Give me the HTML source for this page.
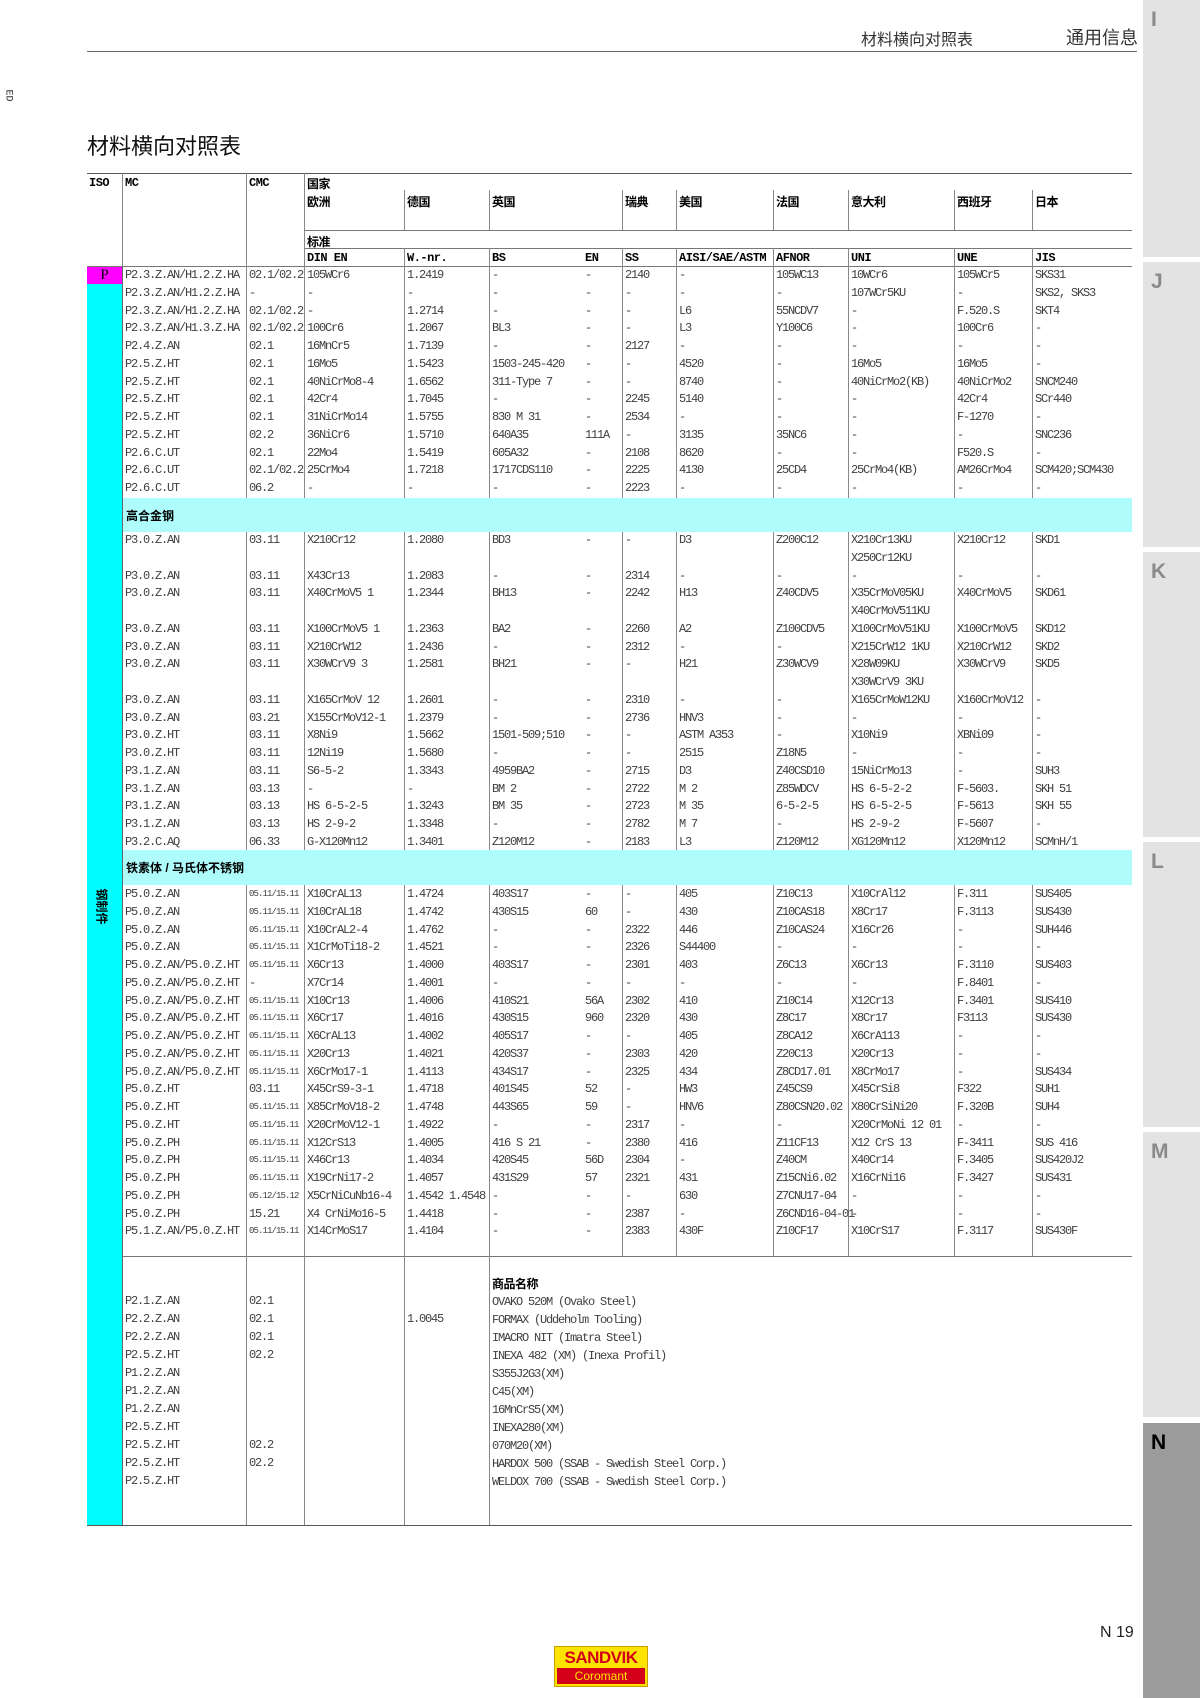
<!DOCTYPE html>
<html><head><meta charset="utf-8">
<style>
*{margin:0;padding:0;box-sizing:border-box}
body{width:1200px;height:1698px;position:relative;background:#fff;overflow:hidden;font-family:"Liberation Mono","Noto Sans CJK SC",monospace;}
.a{position:absolute}
.tab{position:absolute;left:1143px;width:57px;background:#e3e3e3}
.tab b{position:absolute;left:8px;top:8px;font:bold 21px "Liberation Sans",sans-serif;color:#8a8a8a}
.hl{position:absolute;background:#777;height:1px}
.vl{position:absolute;background:#888;width:1px}
.sec{position:absolute;left:0;width:1200px}
.r{position:relative;height:17.75px;font-size:12px;letter-spacing:-1.2px;color:#404040;line-height:17.75px;white-space:nowrap}
.r span{position:absolute;top:0}
.r span:nth-child(1){left:125px}.r span:nth-child(2){left:249px}.r span:nth-child(3){left:307px}
.r span:nth-child(4){left:407px}.r span:nth-child(5){left:492px}.r span:nth-child(6){left:585px}
.r span:nth-child(7){left:625px}.r span:nth-child(8){left:679px}.r span:nth-child(9){left:776px}
.r span:nth-child(10){left:851px}.r span:nth-child(11){left:957px}.r span:nth-child(12){left:1035px}
.r span.s{font-size:9px;letter-spacing:-0.9px}
.h{font-weight:bold;color:#000;font-size:12px;letter-spacing:-0.5px;font-family:"Liberation Mono","Noto Sans CJK SC",monospace}
.band{position:absolute;left:122px;width:1010px;background:#aefcfc}
.band b{position:absolute;left:4px;font:bold 12px "Liberation Sans","Noto Sans CJK SC",sans-serif;color:#000}
.cm{position:absolute;left:492px;font-size:12px;letter-spacing:-1.2px;color:#404040;line-height:18px;white-space:nowrap}
</style></head><body>

<div class="tab" style="top:0;height:257px"><b>I</b></div>
<div class="tab" style="top:262px;height:285px"><b>J</b></div>
<div class="tab" style="top:552px;height:285px"><b>K</b></div>
<div class="tab" style="top:842px;height:285px"><b>L</b></div>
<div class="tab" style="top:1132px;height:285px"><b>M</b></div>
<div class="tab" style="top:1423px;height:275px;background:#9b9b9b"><b style="color:#000">N</b></div>

<div class="a" style="left:861px;top:26px;font:16px 'Liberation Sans','Noto Sans CJK SC',sans-serif;color:#333">材料横向对照表</div>
<div class="a" style="left:1066px;top:24px;font:18px 'Liberation Sans','Noto Sans CJK SC',sans-serif;color:#333">通用信息</div>
<div class="hl" style="left:87px;top:51px;width:1050px;background:#666"></div>
<div class="a" style="left:2px;top:90px;font-size:10px;transform:rotate(90deg);color:#333">ED</div>
<div class="a" style="left:87px;top:129px;font:22px 'Liberation Sans','Noto Sans CJK SC',sans-serif;color:#111">材料横向对照表</div>

<div class="a" style="left:87px;top:266px;width:35px;height:1259px;background:#00fcfc"></div>
<div class="a" style="left:87px;top:267px;width:35px;height:17px;background:#f0f;text-align:center;font:15px 'Liberation Serif',serif;line-height:17px">P</div>
<div class="a" style="left:87px;top:890px;width:35px;height:30px"><div style="position:absolute;left:-3px;top:8px;transform:rotate(90deg);font:bold 12px 'Noto Sans CJK SC',sans-serif">钢制件</div></div>

<div class="band" style="top:498px;height:34px"><b style="top:9px">高合金钢</b></div>
<div class="band" style="top:850px;height:35px"><b style="top:9px">铁素体 / 马氏体不锈钢</b></div>

<div class="a h" style="left:89px;top:176px">ISO</div>
<div class="a h" style="left:125px;top:176px">MC</div>
<div class="a h" style="left:249px;top:176px">CMC</div>
<div class="a h" style="left:307px;top:175px">国家</div>
<div class="a h" style="left:307px;top:193px">欧洲</div>
<div class="a h" style="left:407px;top:193px">德国</div>
<div class="a h" style="left:492px;top:193px">英国</div>
<div class="a h" style="left:625px;top:193px">瑞典</div>
<div class="a h" style="left:679px;top:193px">美国</div>
<div class="a h" style="left:776px;top:193px">法国</div>
<div class="a h" style="left:851px;top:193px">意大利</div>
<div class="a h" style="left:957px;top:193px">西班牙</div>
<div class="a h" style="left:1035px;top:193px">日本</div>
<div class="a h" style="left:307px;top:233px">标准</div>
<div class="a h" style="left:307px;top:251px">DIN EN</div>
<div class="a h" style="left:407px;top:251px">W.-nr.</div>
<div class="a h" style="left:492px;top:251px">BS</div>
<div class="a h" style="left:585px;top:251px">EN</div>
<div class="a h" style="left:625px;top:251px">SS</div>
<div class="a h" style="left:679px;top:251px">AISI/SAE/ASTM</div>
<div class="a h" style="left:776px;top:251px">AFNOR</div>
<div class="a h" style="left:851px;top:251px">UNI</div>
<div class="a h" style="left:957px;top:251px">UNE</div>
<div class="a h" style="left:1035px;top:251px">JIS</div>

<div class="hl" style="left:87px;top:173px;width:1045px;background:#555"></div>
<div class="hl" style="left:304px;top:230px;width:828px"></div>
<div class="hl" style="left:304px;top:248px;width:828px"></div>
<div class="hl" style="left:87px;top:266px;width:1045px"></div>
<div class="hl" style="left:122px;top:1256px;width:1010px"></div>
<div class="hl" style="left:87px;top:1525px;width:1045px;background:#555"></div>

<div class="vl" style="left:122px;top:173px;height:94px"></div>
<div class="vl" style="left:246px;top:173px;height:94px"></div>
<div class="vl" style="left:304px;top:173px;height:94px"></div>
<div class="vl" style="left:404px;top:190px;height:40px"></div><div class="vl" style="left:404px;top:248px;height:18px"></div>
<div class="vl" style="left:489px;top:190px;height:40px"></div><div class="vl" style="left:489px;top:248px;height:18px"></div>
<div class="vl" style="left:622px;top:190px;height:40px"></div><div class="vl" style="left:622px;top:248px;height:18px"></div>
<div class="vl" style="left:676px;top:190px;height:40px"></div><div class="vl" style="left:676px;top:248px;height:18px"></div>
<div class="vl" style="left:773px;top:190px;height:40px"></div><div class="vl" style="left:773px;top:248px;height:18px"></div>
<div class="vl" style="left:848px;top:190px;height:40px"></div><div class="vl" style="left:848px;top:248px;height:18px"></div>
<div class="vl" style="left:954px;top:190px;height:40px"></div><div class="vl" style="left:954px;top:248px;height:18px"></div>
<div class="vl" style="left:1032px;top:190px;height:40px"></div><div class="vl" style="left:1032px;top:248px;height:18px"></div>

<div class="vl" style="left:122px;top:266px;height:1259px;background:#666"></div>
<div class="vl" style="left:246px;top:266px;height:232px"></div><div class="vl" style="left:246px;top:532px;height:318px"></div><div class="vl" style="left:246px;top:885px;height:640px"></div>
<div class="vl" style="left:304px;top:266px;height:232px"></div><div class="vl" style="left:304px;top:532px;height:318px"></div><div class="vl" style="left:304px;top:885px;height:640px"></div>
<div class="vl" style="left:404px;top:266px;height:232px"></div><div class="vl" style="left:404px;top:532px;height:318px"></div><div class="vl" style="left:404px;top:885px;height:640px"></div>
<div class="vl" style="left:489px;top:266px;height:232px"></div><div class="vl" style="left:489px;top:532px;height:318px"></div><div class="vl" style="left:489px;top:885px;height:640px"></div>
<div class="vl" style="left:622px;top:266px;height:232px"></div><div class="vl" style="left:622px;top:532px;height:318px"></div><div class="vl" style="left:622px;top:885px;height:371px"></div>
<div class="vl" style="left:676px;top:266px;height:232px"></div><div class="vl" style="left:676px;top:532px;height:318px"></div><div class="vl" style="left:676px;top:885px;height:371px"></div>
<div class="vl" style="left:773px;top:266px;height:232px"></div><div class="vl" style="left:773px;top:532px;height:318px"></div><div class="vl" style="left:773px;top:885px;height:371px"></div>
<div class="vl" style="left:848px;top:266px;height:232px"></div><div class="vl" style="left:848px;top:532px;height:318px"></div><div class="vl" style="left:848px;top:885px;height:371px"></div>
<div class="vl" style="left:954px;top:266px;height:232px"></div><div class="vl" style="left:954px;top:532px;height:318px"></div><div class="vl" style="left:954px;top:885px;height:371px"></div>
<div class="vl" style="left:1032px;top:266px;height:232px"></div><div class="vl" style="left:1032px;top:532px;height:318px"></div><div class="vl" style="left:1032px;top:885px;height:371px"></div>

<div class="sec" style="top:267px">
<div class="r"><span>P2.3.Z.AN/H1.2.Z.HA</span><span>02.1/02.2</span><span>105WCr6</span><span>1.2419</span><span>-</span><span>-</span><span>2140</span><span>-</span><span>105WC13</span><span>10WCr6</span><span>105WCr5</span><span>SKS31</span></div>
<div class="r"><span>P2.3.Z.AN/H1.2.Z.HA</span><span>-</span><span>-</span><span>-</span><span>-</span><span>-</span><span>-</span><span>-</span><span>-</span><span>107WCr5KU</span><span>-</span><span>SKS2, SKS3</span></div>
<div class="r"><span>P2.3.Z.AN/H1.2.Z.HA</span><span>02.1/02.2</span><span>-</span><span>1.2714</span><span>-</span><span>-</span><span>-</span><span>L6</span><span>55NCDV7</span><span>-</span><span>F.520.S</span><span>SKT4</span></div>
<div class="r"><span>P2.3.Z.AN/H1.3.Z.HA</span><span>02.1/02.2</span><span>100Cr6</span><span>1.2067</span><span>BL3</span><span>-</span><span>-</span><span>L3</span><span>Y100C6</span><span>-</span><span>100Cr6</span><span>-</span></div>
<div class="r"><span>P2.4.Z.AN</span><span>02.1</span><span>16MnCr5</span><span>1.7139</span><span>-</span><span>-</span><span>2127</span><span>-</span><span>-</span><span>-</span><span>-</span><span>-</span></div>
<div class="r"><span>P2.5.Z.HT</span><span>02.1</span><span>16Mo5</span><span>1.5423</span><span>1503-245-420</span><span>-</span><span>-</span><span>4520</span><span>-</span><span>16Mo5</span><span>16Mo5</span><span>-</span></div>
<div class="r"><span>P2.5.Z.HT</span><span>02.1</span><span>40NiCrMo8-4</span><span>1.6562</span><span>311-Type 7</span><span>-</span><span>-</span><span>8740</span><span>-</span><span>40NiCrMo2(KB)</span><span>40NiCrMo2</span><span>SNCM240</span></div>
<div class="r"><span>P2.5.Z.HT</span><span>02.1</span><span>42Cr4</span><span>1.7045</span><span>-</span><span>-</span><span>2245</span><span>5140</span><span>-</span><span>-</span><span>42Cr4</span><span>SCr440</span></div>
<div class="r"><span>P2.5.Z.HT</span><span>02.1</span><span>31NiCrMo14</span><span>1.5755</span><span>830 M 31</span><span>-</span><span>2534</span><span>-</span><span>-</span><span>-</span><span>F-1270</span><span>-</span></div>
<div class="r"><span>P2.5.Z.HT</span><span>02.2</span><span>36NiCr6</span><span>1.5710</span><span>640A35</span><span>111A</span><span>-</span><span>3135</span><span>35NC6</span><span>-</span><span>-</span><span>SNC236</span></div>
<div class="r"><span>P2.6.C.UT</span><span>02.1</span><span>22Mo4</span><span>1.5419</span><span>605A32</span><span>-</span><span>2108</span><span>8620</span><span>-</span><span>-</span><span>F520.S</span><span>-</span></div>
<div class="r"><span>P2.6.C.UT</span><span>02.1/02.2</span><span>25CrMo4</span><span>1.7218</span><span>1717CDS110</span><span>-</span><span>2225</span><span>4130</span><span>25CD4</span><span>25CrMo4(KB)</span><span>AM26CrMo4</span><span>SCM420;SCM430</span></div>
<div class="r"><span>P2.6.C.UT</span><span>06.2</span><span>-</span><span>-</span><span>-</span><span>-</span><span>2223</span><span>-</span><span>-</span><span>-</span><span>-</span><span>-</span></div>
</div>

<div class="sec" style="top:532px">
<div class="r"><span>P3.0.Z.AN</span><span>03.11</span><span>X210Cr12</span><span>1.2080</span><span>BD3</span><span>-</span><span>-</span><span>D3</span><span>Z200C12</span><span>X210Cr13KU</span><span>X210Cr12</span><span>SKD1</span></div>
<div class="r"><span></span><span></span><span></span><span></span><span></span><span></span><span></span><span></span><span></span><span>X250Cr12KU</span></div>
<div class="r"><span>P3.0.Z.AN</span><span>03.11</span><span>X43Cr13</span><span>1.2083</span><span>-</span><span>-</span><span>2314</span><span>-</span><span>-</span><span>-</span><span>-</span><span>-</span></div>
<div class="r"><span>P3.0.Z.AN</span><span>03.11</span><span>X40CrMoV5 1</span><span>1.2344</span><span>BH13</span><span>-</span><span>2242</span><span>H13</span><span>Z40CDV5</span><span>X35CrMoV05KU</span><span>X40CrMoV5</span><span>SKD61</span></div>
<div class="r"><span></span><span></span><span></span><span></span><span></span><span></span><span></span><span></span><span></span><span>X40CrMoV511KU</span></div>
<div class="r"><span>P3.0.Z.AN</span><span>03.11</span><span>X100CrMoV5 1</span><span>1.2363</span><span>BA2</span><span>-</span><span>2260</span><span>A2</span><span>Z100CDV5</span><span>X100CrMoV51KU</span><span>X100CrMoV5</span><span>SKD12</span></div>
<div class="r"><span>P3.0.Z.AN</span><span>03.11</span><span>X210CrW12</span><span>1.2436</span><span>-</span><span>-</span><span>2312</span><span>-</span><span>-</span><span>X215CrW12 1KU</span><span>X210CrW12</span><span>SKD2</span></div>
<div class="r"><span>P3.0.Z.AN</span><span>03.11</span><span>X30WCrV9 3</span><span>1.2581</span><span>BH21</span><span>-</span><span>-</span><span>H21</span><span>Z30WCV9</span><span>X28W09KU</span><span>X30WCrV9</span><span>SKD5</span></div>
<div class="r"><span></span><span></span><span></span><span></span><span></span><span></span><span></span><span></span><span></span><span>X30WCrV9 3KU</span></div>
<div class="r"><span>P3.0.Z.AN</span><span>03.11</span><span>X165CrMoV 12</span><span>1.2601</span><span>-</span><span>-</span><span>2310</span><span>-</span><span>-</span><span>X165CrMoW12KU</span><span>X160CrMoV12</span><span>-</span></div>
<div class="r"><span>P3.0.Z.AN</span><span>03.21</span><span>X155CrMoV12-1</span><span>1.2379</span><span>-</span><span>-</span><span>2736</span><span>HNV3</span><span>-</span><span>-</span><span>-</span><span>-</span></div>
<div class="r"><span>P3.0.Z.HT</span><span>03.11</span><span>X8Ni9</span><span>1.5662</span><span>1501-509;510</span><span>-</span><span>-</span><span>ASTM A353</span><span>-</span><span>X10Ni9</span><span>XBNi09</span><span>-</span></div>
<div class="r"><span>P3.0.Z.HT</span><span>03.11</span><span>12Ni19</span><span>1.5680</span><span>-</span><span>-</span><span>-</span><span>2515</span><span>Z18N5</span><span>-</span><span>-</span><span>-</span></div>
<div class="r"><span>P3.1.Z.AN</span><span>03.11</span><span>S6-5-2</span><span>1.3343</span><span>4959BA2</span><span>-</span><span>2715</span><span>D3</span><span>Z40CSD10</span><span>15NiCrMo13</span><span>-</span><span>SUH3</span></div>
<div class="r"><span>P3.1.Z.AN</span><span>03.13</span><span>-</span><span>-</span><span>BM 2</span><span>-</span><span>2722</span><span>M 2</span><span>Z85WDCV</span><span>HS 6-5-2-2</span><span>F-5603.</span><span>SKH 51</span></div>
<div class="r"><span>P3.1.Z.AN</span><span>03.13</span><span>HS 6-5-2-5</span><span>1.3243</span><span>BM 35</span><span>-</span><span>2723</span><span>M 35</span><span>6-5-2-5</span><span>HS 6-5-2-5</span><span>F-5613</span><span>SKH 55</span></div>
<div class="r"><span>P3.1.Z.AN</span><span>03.13</span><span>HS 2-9-2</span><span>1.3348</span><span>-</span><span>-</span><span>2782</span><span>M 7</span><span>-</span><span>HS 2-9-2</span><span>F-5607</span><span>-</span></div>
<div class="r"><span>P3.2.C.AQ</span><span>06.33</span><span>G-X120Mn12</span><span>1.3401</span><span>Z120M12</span><span>-</span><span>2183</span><span>L3</span><span>Z120M12</span><span>XG120Mn12</span><span>X120Mn12</span><span>SCMnH/1</span></div>
</div>

<div class="sec" style="top:886px">
<div class="r"><span>P5.0.Z.AN</span><span class="s">05.11/15.11</span><span>X10CrAL13</span><span>1.4724</span><span>403S17</span><span>-</span><span>-</span><span>405</span><span>Z10C13</span><span>X10CrAl12</span><span>F.311</span><span>SUS405</span></div>
<div class="r"><span>P5.0.Z.AN</span><span class="s">05.11/15.11</span><span>X10CrAL18</span><span>1.4742</span><span>430S15</span><span>60</span><span>-</span><span>430</span><span>Z10CAS18</span><span>X8Cr17</span><span>F.3113</span><span>SUS430</span></div>
<div class="r"><span>P5.0.Z.AN</span><span class="s">05.11/15.11</span><span>X10CrAL2-4</span><span>1.4762</span><span>-</span><span>-</span><span>2322</span><span>446</span><span>Z10CAS24</span><span>X16Cr26</span><span>-</span><span>SUH446</span></div>
<div class="r"><span>P5.0.Z.AN</span><span class="s">05.11/15.11</span><span>X1CrMoTi18-2</span><span>1.4521</span><span>-</span><span>-</span><span>2326</span><span>S44400</span><span>-</span><span>-</span><span>-</span><span>-</span></div>
<div class="r"><span>P5.0.Z.AN/P5.0.Z.HT</span><span class="s">05.11/15.11</span><span>X6Cr13</span><span>1.4000</span><span>403S17</span><span>-</span><span>2301</span><span>403</span><span>Z6C13</span><span>X6Cr13</span><span>F.3110</span><span>SUS403</span></div>
<div class="r"><span>P5.0.Z.AN/P5.0.Z.HT</span><span>-</span><span>X7Cr14</span><span>1.4001</span><span>-</span><span>-</span><span>-</span><span>-</span><span>-</span><span>-</span><span>F.8401</span><span>-</span></div>
<div class="r"><span>P5.0.Z.AN/P5.0.Z.HT</span><span class="s">05.11/15.11</span><span>X10Cr13</span><span>1.4006</span><span>410S21</span><span>56A</span><span>2302</span><span>410</span><span>Z10C14</span><span>X12Cr13</span><span>F.3401</span><span>SUS410</span></div>
<div class="r"><span>P5.0.Z.AN/P5.0.Z.HT</span><span class="s">05.11/15.11</span><span>X6Cr17</span><span>1.4016</span><span>430S15</span><span>960</span><span>2320</span><span>430</span><span>Z8C17</span><span>X8Cr17</span><span>F3113</span><span>SUS430</span></div>
<div class="r"><span>P5.0.Z.AN/P5.0.Z.HT</span><span class="s">05.11/15.11</span><span>X6CrAL13</span><span>1.4002</span><span>405S17</span><span>-</span><span>-</span><span>405</span><span>Z8CA12</span><span>X6CrA113</span><span>-</span><span>-</span></div>
<div class="r"><span>P5.0.Z.AN/P5.0.Z.HT</span><span class="s">05.11/15.11</span><span>X20Cr13</span><span>1.4021</span><span>420S37</span><span>-</span><span>2303</span><span>420</span><span>Z20C13</span><span>X20Cr13</span><span>-</span><span>-</span></div>
<div class="r"><span>P5.0.Z.AN/P5.0.Z.HT</span><span class="s">05.11/15.11</span><span>X6CrMo17-1</span><span>1.4113</span><span>434S17</span><span>-</span><span>2325</span><span>434</span><span>Z8CD17.01</span><span>X8CrMo17</span><span>-</span><span>SUS434</span></div>
<div class="r"><span>P5.0.Z.HT</span><span>03.11</span><span>X45CrS9-3-1</span><span>1.4718</span><span>401S45</span><span>52</span><span>-</span><span>HW3</span><span>Z45CS9</span><span>X45CrSi8</span><span>F322</span><span>SUH1</span></div>
<div class="r"><span>P5.0.Z.HT</span><span class="s">05.11/15.11</span><span>X85CrMoV18-2</span><span>1.4748</span><span>443S65</span><span>59</span><span>-</span><span>HNV6</span><span>Z80CSN20.02</span><span>X80CrSiNi20</span><span>F.320B</span><span>SUH4</span></div>
<div class="r"><span>P5.0.Z.HT</span><span class="s">05.11/15.11</span><span>X20CrMoV12-1</span><span>1.4922</span><span>-</span><span>-</span><span>2317</span><span>-</span><span>-</span><span>X20CrMoNi 12 01</span><span>-</span><span>-</span></div>
<div class="r"><span>P5.0.Z.PH</span><span class="s">05.11/15.11</span><span>X12CrS13</span><span>1.4005</span><span>416 S 21</span><span>-</span><span>2380</span><span>416</span><span>Z11CF13</span><span>X12 CrS 13</span><span>F-3411</span><span>SUS 416</span></div>
<div class="r"><span>P5.0.Z.PH</span><span class="s">05.11/15.11</span><span>X46Cr13</span><span>1.4034</span><span>420S45</span><span>56D</span><span>2304</span><span>-</span><span>Z40CM</span><span>X40Cr14</span><span>F.3405</span><span>SUS420J2</span></div>
<div class="r"><span>P5.0.Z.PH</span><span class="s">05.11/15.11</span><span>X19CrNi17-2</span><span>1.4057</span><span>431S29</span><span>57</span><span>2321</span><span>431</span><span>Z15CNi6.02</span><span>X16CrNi16</span><span>F.3427</span><span>SUS431</span></div>
<div class="r"><span>P5.0.Z.PH</span><span class="s">05.12/15.12</span><span>X5CrNiCuNb16-4</span><span>1.4542 1.4548</span><span>-</span><span>-</span><span>-</span><span>630</span><span>Z7CNU17-04</span><span>-</span><span>-</span><span>-</span></div>
<div class="r"><span>P5.0.Z.PH</span><span>15.21</span><span>X4 CrNiMo16-5</span><span>1.4418</span><span>-</span><span>-</span><span>2387</span><span>-</span><span>Z6CND16-04-01</span><span>-</span><span>-</span><span>-</span></div>
<div class="r"><span>P5.1.Z.AN/P5.0.Z.HT</span><span class="s">05.11/15.11</span><span>X14CrMoS17</span><span>1.4104</span><span>-</span><span>-</span><span>2383</span><span>430F</span><span>Z10CF17</span><span>X10CrS17</span><span>F.3117</span><span>SUS430F</span></div>
</div>

<div class="a h" style="left:492px;top:1275px">商品名称</div>
<div class="sec" style="top:1293px">
<div class="r" style="height:18px"><span>P2.1.Z.AN</span><span>02.1</span></div>
<div class="r" style="height:18px"><span>P2.2.Z.AN</span><span>02.1</span><span></span><span>1.0045</span></div>
<div class="r" style="height:18px"><span>P2.2.Z.AN</span><span>02.1</span></div>
<div class="r" style="height:18px"><span>P2.5.Z.HT</span><span>02.2</span></div>
<div class="r" style="height:18px"><span>P1.2.Z.AN</span></div>
<div class="r" style="height:18px"><span>P1.2.Z.AN</span></div>
<div class="r" style="height:18px"><span>P1.2.Z.AN</span></div>
<div class="r" style="height:18px"><span>P2.5.Z.HT</span></div>
<div class="r" style="height:18px"><span>P2.5.Z.HT</span><span>02.2</span></div>
<div class="r" style="height:18px"><span>P2.5.Z.HT</span><span>02.2</span></div>
<div class="r" style="height:18px"><span>P2.5.Z.HT</span></div>
</div>
<div class="cm" style="top:1293px">OVAKO 520M (Ovako Steel)<br>FORMAX (Uddeholm Tooling)<br>IMACRO NIT (Imatra Steel)<br>INEXA 482 (XM) (Inexa Profil)<br>S355J2G3(XM)<br>C45(XM)<br>16MnCrS5(XM)<br>INEXA280(XM)<br>070M20(XM)<br>HARDOX 500 (SSAB - Swedish Steel Corp.)<br>WELDOX 700 (SSAB - Swedish Steel Corp.)</div>

<div class="a" style="left:554px;top:1646px;width:94px;height:41px;background:#fde300;border:1px solid #c9a000">
<div style="position:absolute;left:2px;top:1px;width:88px;text-align:center;font:bold 17px 'Liberation Sans',sans-serif;color:#d4001a;letter-spacing:-0.5px;line-height:19px">SANDVIK</div>
<div style="position:absolute;left:2px;top:21px;width:88px;height:16px;background:#d4001a;color:#fde300;text-align:center;font:12px 'Liberation Sans',sans-serif;line-height:16px">Coromant</div>
</div>
<div class="a" style="left:1100px;top:1624px;font:16px 'Liberation Sans',sans-serif;color:#222">N 19</div>
</body></html>
